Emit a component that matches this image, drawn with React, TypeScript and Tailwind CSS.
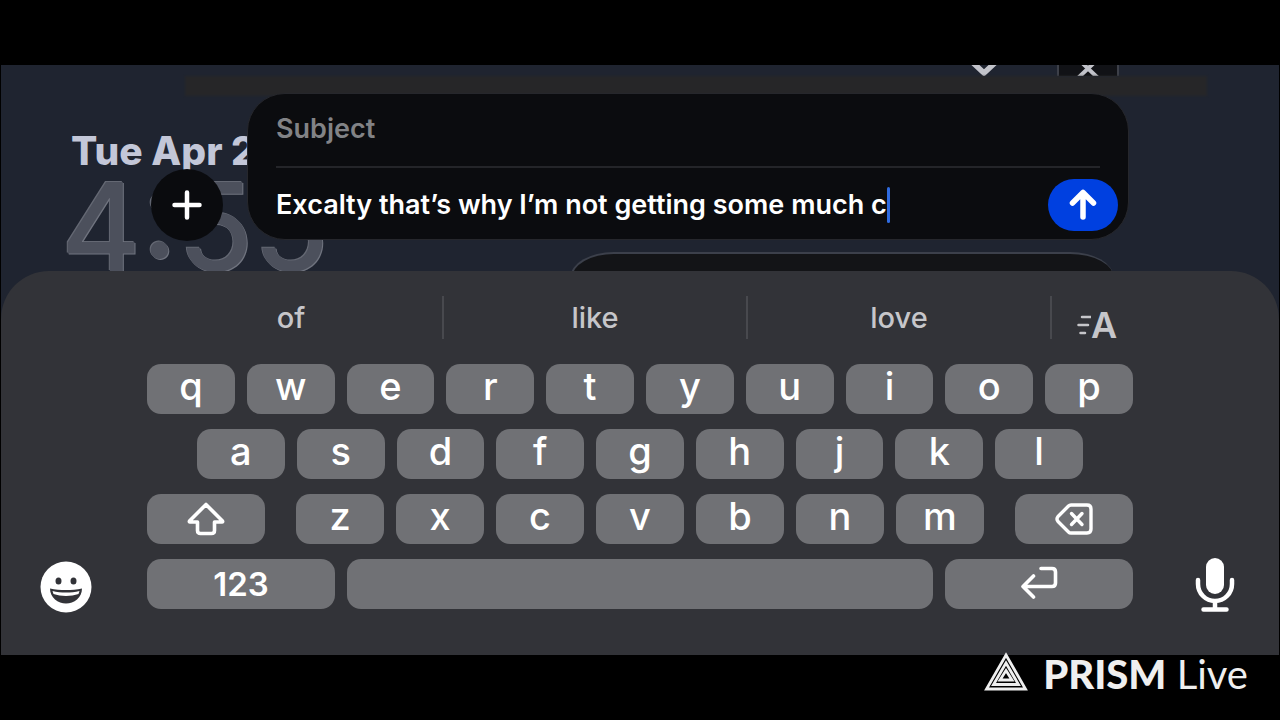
import { useState } from "react";
import type { ReactNode } from "react";

const firstRow = ["q", "w", "e", "r", "t", "y", "u", "i", "o", "p"];
const secondRow = ["a", "s", "d", "f", "g", "h", "j", "k", "l"];
const thirdRow = ["z", "x", "c", "v", "b", "n", "m"];
const suggestions = ["of", "like", "love"];

const keyBase =
  "flex h-[50px] items-center justify-center rounded-[14px] bg-[#707175] text-white";

function Key({ label, onPress }: { label: string; onPress: (key: string) => void }) {
  return (
    <button
      type="button"
      onClick={() => onPress(label)}
      className={`${keyBase} min-w-0 flex-1 pb-1.5 text-[38px] leading-none font-[450]`}
    >
      {label}
    </button>
  );
}

function WideKey({
  name,
  width,
  children,
  onPress,
}: {
  name: string;
  width: string;
  children?: ReactNode;
  onPress?: () => void;
}) {
  return (
    <button type="button" aria-label={name} onClick={onPress} className={`${keyBase} ${width}`}>
      {children}
    </button>
  );
}

function Wallpaper() {
  return (
    <div className="absolute inset-0 overflow-hidden bg-[#1f2430]" aria-hidden="true">
      <div className="absolute top-0 right-[160px] flex h-[11px] items-start gap-[58px] overflow-hidden">
        <svg width="30" height="11" viewBox="0 0 30 11" fill="none">
          <path d="M0 -6 L15 8 L30 -6" stroke="#c2c3ca" strokeWidth="5.5" />
        </svg>
        <div className="flex h-5 w-[62px] justify-center border-x-2 border-[#3d4049] bg-[#111216]">
          <svg width="24" height="16" viewBox="0 0 24 16" fill="none">
            <path d="M2 -6 L22 13 M22 -6 L2 13" stroke="#c2c3ca" strokeWidth="4" />
          </svg>
        </div>
      </div>
      <div className="absolute top-[11px] right-[72px] left-[184px] h-5 bg-[#262628] blur-[1px]" />
      <p className="absolute top-[62px] left-[70px] text-[39px] leading-[48px] font-extrabold whitespace-nowrap text-[#c3c7d8]">
        Tue Apr 2
      </p>
      <p className="absolute top-[100px] left-[60px] text-[122px] leading-[124px] font-medium whitespace-nowrap text-[#4c505c] [text-shadow:1px_1px_0_#70747f,-1px_-1px_0_#646873]">
        4:55
      </p>
      <div className="absolute top-[187px] right-[165px] left-[569px] h-20 rounded-t-[44px_26px] border-t-2 border-l-2 border-[#3c404b] bg-[#131417]" />
    </div>
  );
}

export default function App() {
  const [subject, setSubject] = useState("");
  const [message, setMessage] = useState("Excalty that’s why I’m not getting some much c");
  const type = (key: string) => setMessage((text) => text + key);

  return (
    <div className="flex min-h-screen flex-col bg-black font-['Inter','Liberation_Sans',sans-serif]">
      <main className="relative mx-px mt-[65px]">
        <Wallpaper />

        <form
          className="relative flex items-end gap-6 pt-7 pr-[150px] pb-[31px] pl-[150px]"
          onSubmit={(event) => event.preventDefault()}
        >
          <button
            type="button"
            aria-label="Add attachment"
            className="-mb-px flex size-[72px] shrink-0 items-center justify-center rounded-full bg-[#0a0b0e] text-white"
          >
            <svg width="32" height="32" viewBox="0 0 32 32" fill="none">
              <path d="M16 3.5 V28.5 M3.5 16 H28.5" stroke="currentColor" strokeWidth="4.5" strokeLinecap="round" />
            </svg>
          </button>

          <div className="min-w-0 flex-1 rounded-[38px] border border-[#26272c] bg-[#0b0c0f] text-[27px] leading-9 font-semibold">
            <div className="mx-7 flex h-[74px] items-center border-b-2 border-[#242529] pb-0.5">
              <input
                aria-label="Subject"
                placeholder="Subject"
                value={subject}
                onChange={(event) => setSubject(event.target.value)}
                className="w-full bg-transparent text-white outline-none placeholder:text-[#828386]"
              />
            </div>
            <div className="flex h-[71px] items-center pt-[3px] pr-2.5 pl-7">
              <div className="flex min-w-0 flex-1 items-center">
                <input
                  aria-label="Message"
                  value={message}
                  onChange={(event) => setMessage(event.target.value)}
                  className="field-sizing-content max-w-full bg-transparent text-white caret-transparent outline-none"
                />
                <span className="h-9 w-[3px] shrink-0 rounded-full bg-[#2f6be0]" />
              </div>
              <button
                type="submit"
                aria-label="Send"
                className="flex h-[52px] w-[70px] shrink-0 items-center justify-center rounded-full bg-[#0040e0] text-white"
              >
                <svg width="32" height="34" viewBox="0 0 32 34" fill="none">
                  <path
                    d="M16 29 V5 M5.5 15 L16 4.5 L26.500 15"
                    stroke="currentColor"
                    strokeWidth="5.5"
                    strokeLinecap="round"
                    strokeLinejoin="round"
                  />
                </svg>
              </button>
            </div>
          </div>
        </form>

        <section
          aria-label="Keyboard"
          className="relative flex items-end rounded-t-[48px] bg-[#323338] pt-[25px] pb-[46px] text-white"
        >
          <div className="-mb-1 flex w-[137px] shrink-0 justify-center pr-2">
            <button type="button" aria-label="Emoji">
              <svg width="52" height="52" viewBox="0 0 52 52">
                <circle cx="26" cy="26" r="25.500" fill="#fff" />
                <ellipse cx="18.500" cy="20" rx="3" ry="3.600" fill="#323338" />
                <ellipse cx="33.500" cy="20" rx="3" ry="3.600" fill="#323338" />
                <path
                  d="M10 27.500 C20 29.500 32 29.500 42 27.500 C42 36.500 34 42.500 26 42.500 C18 42.500 10 36.500 10 27.500 Z"
                  fill="#323338"
                />
                <path d="M12.500 30 C21 32 31 32 39.500 30 L38.500 33 C31 35.500 21 35.500 13.500 33 Z" fill="#fff" />
              </svg>
            </button>
          </div>

          <div className="flex min-w-0 flex-1 flex-col gap-[25px]">
            <div className="flex h-[43px]">
              {suggestions.map((word) => (
                <button
                  key={word}
                  type="button"
                  onClick={() => type(" " + word)}
                  className="flex-1 border-l-2 border-[#48494e] text-[29px] leading-[43px] font-[450] text-[#c6c6ca] first:border-transparent"
                >
                  {word}
                </button>
              ))}
              <button
                type="button"
                aria-label="Text formatting"
                className="flex w-[92px] items-end justify-center border-l-2 border-[#48494e] text-[36px] leading-7 font-semibold text-[#c6c6ca]"
              >
                <svg width="14" height="28" viewBox="0 0 14 28" fill="none">
                  <path
                    d="M5 6 H15 M1.500 14 H11 M3.500 22 H8"
                    stroke="currentColor"
                    strokeWidth="2.500"
                    strokeLinecap="round"
                  />
                </svg>
                A
              </button>
            </div>

            <div className="flex flex-col gap-[15px] px-[9px]">
              <div className="flex gap-3">
                {firstRow.map((key) => (
                  <Key key={key} label={key} onPress={type} />
                ))}
              </div>
              <div className="flex gap-3 px-[50px]">
                {secondRow.map((key) => (
                  <Key key={key} label={key} onPress={type} />
                ))}
              </div>
              <div className="flex gap-[31px]">
                <WideKey name="Shift" width="w-[118px]">
                  <svg width="38" height="34" viewBox="0 0 38 34" fill="none">
                    <path
                      d="M19 2.500 L35.500 19 Q36 20 35 20 H27.500 V28.500 Q27.500 31.500 24.500 31.500 H13.500 Q10.500 31.500 10.500 28.500 V20 H3 Q2 20 2.500 19 Z"
                      stroke="currentColor"
                      strokeWidth="3.600"
                      strokeLinejoin="round"
                    />
                  </svg>
                </WideKey>
                <div className="flex min-w-0 flex-1 gap-3">
                  {thirdRow.map((key) => (
                    <Key key={key} label={key} onPress={type} />
                  ))}
                </div>
                <WideKey
                  name="Delete"
                  width="w-[118px]"
                  onPress={() => setMessage((text) => text.slice(0, -1))}
                >
                  <svg width="38" height="32" viewBox="0 0 38 32" fill="none">
                    <g stroke="currentColor" strokeWidth="3.400" strokeLinecap="round" strokeLinejoin="round">
                      <path d="M16 2 H32 Q36 2 36 6 V26 Q36 30 32 30 H16 Q14.500 30 13.500 29 L3 18.500 Q1 16 3 13.500 L13.500 3 Q14.500 2 16 2 Z" />
                      <path d="M16.500 10.500 L27 21.500 M27 10.500 L16.500 21.500" />
                    </g>
                  </svg>
                </WideKey>
              </div>
              <div className="flex gap-3">
                <button
                  type="button"
                  className={`${keyBase} w-[188px] text-[33px] leading-none font-semibold`}
                >
                  123
                </button>
                <WideKey name="Space" width="min-w-0 flex-1" onPress={() => type(" ")} />
                <WideKey name="Return" width="w-[188px] pb-1">
                  <svg width="38" height="34" viewBox="0 0 38 34" fill="none">
                    <path
                      d="M21 3.500 H32 Q35.500 3.500 35.500 7 V18 Q35.500 21.500 32 21.500 H3 M13.500 11 L3 21.500 L13.500 32"
                      stroke="currentColor"
                      strokeWidth="3.600"
                      strokeLinecap="round"
                      strokeLinejoin="round"
                    />
                  </svg>
                </WideKey>
              </div>
            </div>
          </div>

          <div className="-mb-1 flex w-[137px] shrink-0 justify-center pl-2">
            <button type="button" aria-label="Dictate">
              <svg width="40" height="56" viewBox="0 0 40 56" fill="none">
                <rect x="11" y="1" width="18" height="36" rx="9" fill="currentColor" />
                <path
                  d="M3 23 V27 A17 17 0 0 0 37 27 V23 M20 44 V52 M8.500 52.500 H31.500"
                  stroke="currentColor"
                  strokeWidth="4.500"
                  strokeLinecap="round"
                />
              </svg>
            </button>
          </div>
        </section>
      </main>

      <footer className="relative -mt-1 flex items-start justify-end gap-[15px] pr-8 text-[#efefef]">
        <svg width="44" height="40" viewBox="0 0 44 40" fill="none">
          <g stroke="currentColor" strokeWidth="2.800">
            <path d="M22 4 L41.500 38 H2.500 Z" />
            <path d="M22 12 L34.500 33.500 H9.500 Z" />
            <path d="M22 19.500 L28 29 H16 Z" />
          </g>
        </svg>
        <p className="font-['Lato','Liberation_Sans',sans-serif] text-[40px] leading-[46px]">
          <span className="font-black">PRISM</span> Live
        </p>
      </footer>
    </div>
  );
}
